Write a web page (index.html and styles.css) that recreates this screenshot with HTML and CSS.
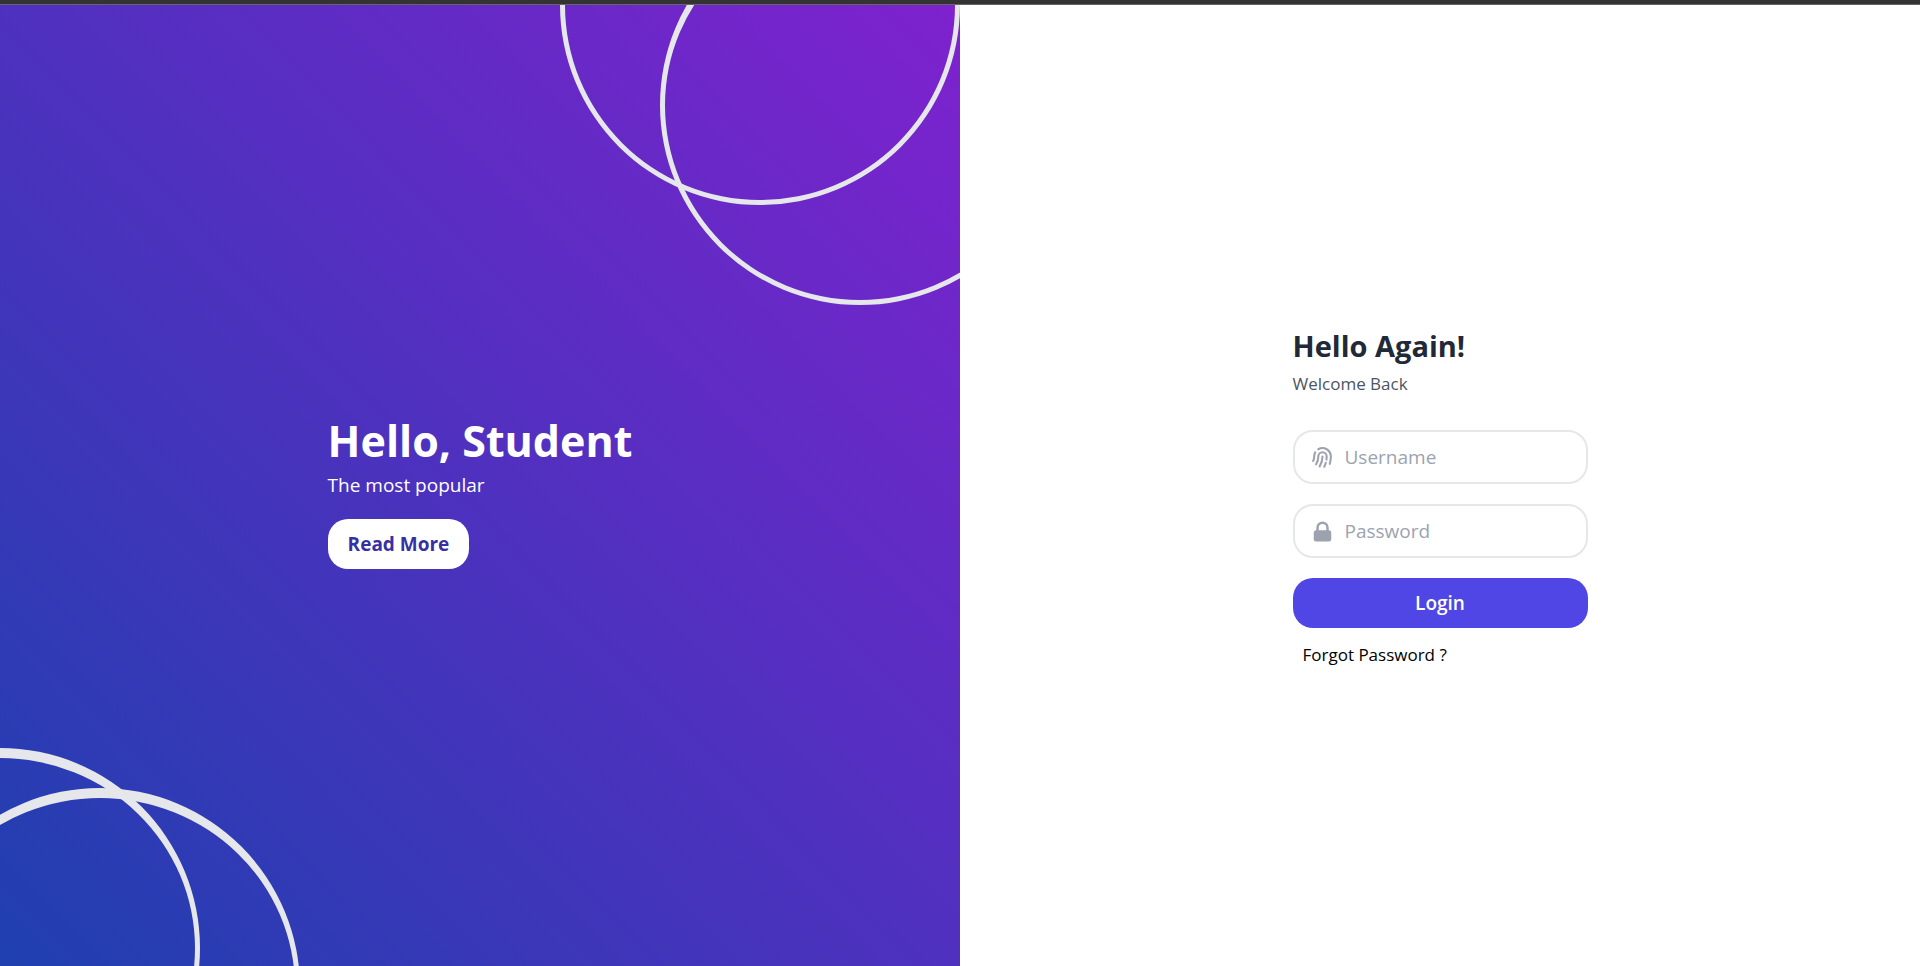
FILE: index.html
```
<!DOCTYPE html>
<html lang="en">
<head>
<meta charset="utf-8">
<meta name="viewport" content="width=device-width, initial-scale=1">
<title>Student Login</title>
<link rel="stylesheet" href="styles.css">
</head>
<body>
<main class="page">
  <section class="hero">
    <div class="hero-content">
      <h1 class="hero-title">Hello, Student</h1>
      <p class="hero-text">The most popular</p>
      <button type="button" class="read-more">Read More</button>
    </div>
    <div class="ring ring-bottom-inner"></div>
    <div class="ring ring-bottom-outer"></div>
    <div class="ring ring-top-outer"></div>
    <div class="ring ring-top-inner"></div>
  </section>
  <section class="login">
    <form class="login-form">
      <h2 class="login-title">Hello Again!</h2>
      <p class="login-text">Welcome Back</p>
      <label class="field">
        <svg class="field-icon" viewBox="0 0 24 24" fill="none" stroke="currentColor" stroke-width="2" stroke-linecap="round" stroke-linejoin="round" aria-hidden="true">
          <path d="M12 11c0 3.517-1.009 6.799-2.753 9.571m-3.44-2.04l.054-.09A13.916 13.916 0 008 11a4 4 0 118 0c0 1.017-.07 2.019-.203 3m-2.118 6.844A21.88 21.88 0 0015.171 17m3.839 1.132c.645-2.266.99-4.659.99-7.132A8 8 0 008 4.07M3 15.364c.64-1.319 1-2.8 1-4.364 0-1.457.39-2.823 1.07-4"/>
        </svg>
        <input class="field-input" type="text" name="username" placeholder="Username" aria-label="Username">
      </label>
      <label class="field">
        <svg class="field-icon" viewBox="0 0 20 20" fill="currentColor" aria-hidden="true">
          <path fill-rule="evenodd" clip-rule="evenodd" d="M5 9V7a5 5 0 0110 0v2a2 2 0 012 2v5a2 2 0 01-2 2H5a2 2 0 01-2-2v-5a2 2 0 012-2zm8-2v2H7V7a3 3 0 016 0z"/>
        </svg>
        <input class="field-input" type="password" name="password" placeholder="Password" aria-label="Password">
      </label>
      <button type="submit" class="submit">Login</button>
      <a class="forgot" href="#">Forgot Password ?</a>
    </form>
  </section>
</main>
</body>
</html>
```
FILE: styles.css
```
*,
*::before,
*::after {
  box-sizing: border-box;
}

body {
  margin: 0;
  height: 100vh;
  overflow: hidden;
  border-top: 4px solid #333333;
  background: #ffffff;
  font-family: "Segoe UI", "Open Sans", "Noto Sans", sans-serif;
  font-size: 19px;
  line-height: 30px;
  color: #000000;
}

h1,
h2,
p {
  margin: 0;
}

button,
input {
  font: inherit;
}

.page {
  display: flex;
  min-height: calc(100vh + 18px);
  border-top: 1px solid #666666;
}

.hero {
  position: relative;
  flex: 1;
  display: flex;
  align-items: center;
  justify-content: center;
  overflow: hidden;
  background: linear-gradient(to top right, #1e40af, #7e22ce);
}

.hero-content {
  padding-bottom: 8px;
}

.hero-title {
  font-size: 43px;
  line-height: 50px;
  font-weight: 700;
  color: #ffffff;
}

.hero-text {
  margin-top: 4px;
  color: #ffffff;
}

.read-more {
  margin-top: 19px;
  padding: 10px 20px;
  border: 0;
  border-radius: 20px;
  background: #ffffff;
  color: #3730a3;
  font-weight: 700;
}

/* Decorative rings, clipped by the panel */
.ring {
  position: absolute;
  width: 400px;
  height: 400px;
  border: 5px solid #e5e7eb;
  border-top-width: 10px;
  border-radius: 50%;
}

.ring-bottom-inner {
  bottom: -160px;
  left: -200px;
}

.ring-bottom-outer {
  bottom: -200px;
  left: -100px;
}

.ring-top-outer {
  top: -200px;
  right: 0;
}

.ring-top-inner {
  top: -100px;
  right: -100px;
}

.login {
  flex: 1;
  display: flex;
  align-items: center;
  justify-content: center;
}

.login-form {
  display: flex;
  flex-direction: column;
  width: 295px;
}

.login-title {
  font-size: 29px;
  line-height: 40px;
  font-weight: 700;
  color: #1f2937;
}

.login-text {
  margin: 5px 0 34px;
  font-size: 17px;
  line-height: 25px;
  color: #4b5563;
}

.field {
  display: flex;
  align-items: center;
  gap: 10px;
  margin-bottom: 20px;
  padding: 10px 15px;
  border: 2px solid #e5e7eb;
  border-radius: 20px;
}

.field-icon {
  flex: none;
  width: 25px;
  height: 25px;
  color: #9ca3af;
}

.field-input {
  flex: 1;
  min-width: 0;
  height: 30px;
  padding: 0;
  border: 0;
  outline: 0;
  background: transparent;
}

.field-input::placeholder {
  color: #9ca3af;
  opacity: 1;
}

.submit {
  padding: 10px 0;
  border: 0;
  border-radius: 20px;
  background: #4f46e5;
  color: #ffffff;
  font-weight: 600;
}

.forgot {
  align-self: flex-start;
  margin: 14px 0 0 10px;
  font-size: 17px;
  line-height: 25px;
  color: #000000;
  text-decoration: none;
}
```
